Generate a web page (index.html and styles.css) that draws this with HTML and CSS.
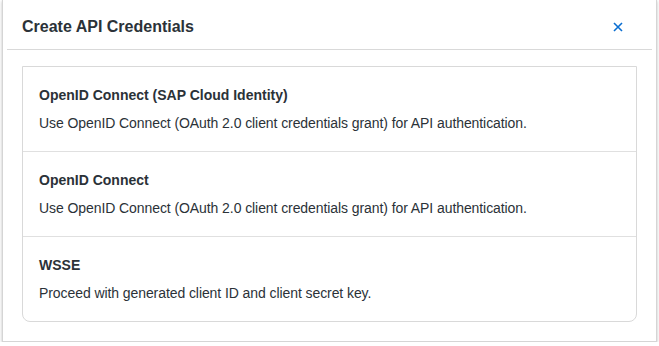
FILE: index.html
```html
<!DOCTYPE html>
<html lang="en">
<head>
    <meta charset="UTF-8">
    <meta name="viewport" content="width=device-width, initial-scale=1.0">
    <title>Create API Credentials</title>
    <link rel="stylesheet" href="styles.css">
</head>
<body>
    <div class="dialog">
        <header class="dialog-header">
            <h1>Create API Credentials</h1>
            <button class="close-btn" type="button" aria-label="Close">
                <svg width="10" height="10" viewBox="0 0 10 10">
                    <path d="M1 1 L9 9 M9 1 L1 9" stroke="#0a6ed1" stroke-width="1.6" fill="none"/>
                </svg>
            </button>
        </header>
        <main class="dialog-content">
            <ul class="option-list">
                <li class="option">
                    <div class="option-title">OpenID Connect (SAP Cloud Identity)</div>
                    <div class="option-desc">Use OpenID Connect (OAuth 2.0 client credentials grant) for API authentication.</div>
                </li>
                <li class="option">
                    <div class="option-title">OpenID Connect</div>
                    <div class="option-desc">Use OpenID Connect (OAuth 2.0 client credentials grant) for API authentication.</div>
                </li>
                <li class="option">
                    <div class="option-title">WSSE</div>
                    <div class="option-desc">Proceed with generated client ID and client secret key.</div>
                </li>
            </ul>
        </main>
    </div>
</body>
</html>
```

FILE: styles.css
```css
body {
    font-family: "Liberation Sans", Arial, sans-serif;
    margin: 0;
    padding: 0;
    background-color: #fff;
    color: #2b3238;
}

.dialog {
    width: 655px;
    height: 342px;
    margin: 0 2px;
    background-color: #fff;
    border: 1px solid #d5d5d5;
    border-top: none;
    box-shadow: 0 1px 3px rgba(0, 0, 0, 0.25);
    box-sizing: border-box;
}

.dialog-header {
    display: flex;
    align-items: center;
    justify-content: space-between;
    height: 49px;
    margin: 0 4px;
    padding: 0 29px 0 15px;
    border-bottom: 1px solid #d9d9d9;
}

.dialog-header h1 {
    margin: 0;
    font-size: 16px;
    font-weight: bold;
    color: #2b3238;
    padding-top: 5px;
}

.close-btn {
    border: none;
    background: none;
    padding: 0;
    margin-top: 4px;
    display: flex;
    cursor: pointer;
}

.dialog-content {
    padding: 16px 19px 0 19px;
}

.option-list {
    list-style-type: none;
    margin: 0;
    padding: 0;
    border: 1px solid #d9d9d9;
    border-radius: 0 0 8px 8px;
}

.option {
    padding: 19px 16px 19px 16px;
    border-top: 1px solid #e0e0e0;
}

.option:first-child {
    border-top: none;
}

.option-title {
    font-size: 14px;
    font-weight: bold;
    line-height: 18px;
    margin-bottom: 10px;
}

.option-desc {
    font-size: 14px;
    line-height: 18px;
    letter-spacing: -0.08px;
}
```
